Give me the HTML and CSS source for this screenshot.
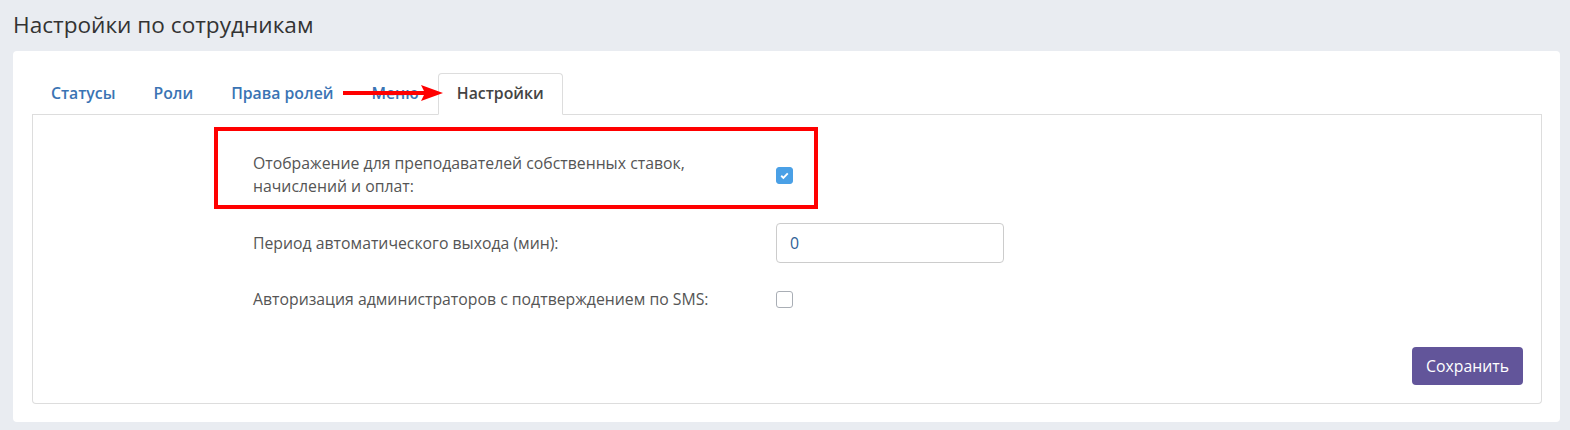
FILE: index.html
```html
<!DOCTYPE html>
<html lang="ru">
<head>
    <meta charset="UTF-8">
    <title>Настройки по сотрудникам</title>
    <link rel="stylesheet" href="styles.css">
</head>
<body>
    <h1 class="page-title">Настройки по сотрудникам</h1>
    <div class="card">
        <ul class="tabs">
            <li><a href="#">Статусы</a></li>
            <li><a href="#">Роли</a></li>
            <li><a href="#">Права ролей</a></li>
            <li><a href="#">Меню</a></li>
            <li class="active"><a href="#">Настройки</a></li>
        </ul>
        <div class="tab-panel">
            <form class="settings-form" action="#" method="post">
                <div class="form-row">
                    <label for="showRates">Отображение для преподавателей собственных ставок, начислений и оплат:</label>
                    <div class="control"><input type="checkbox" id="showRates" checked></div>
                </div>
                <div class="form-row">
                    <label for="logoutPeriod">Период автоматического выхода (мин):</label>
                    <div class="control"><input type="text" id="logoutPeriod" value="0"></div>
                </div>
                <div class="form-row">
                    <label for="smsAuth">Авторизация администраторов с подтверждением по SMS:</label>
                    <div class="control"><input type="checkbox" id="smsAuth"></div>
                </div>
                <div class="form-actions">
                    <button type="submit">Сохранить</button>
                </div>
            </form>
        </div>

        <!-- пометки поверх скриншота -->
        <div class="mark-box"></div>
        <div class="mark-arrow">
            <svg width="100" height="16" viewBox="0 0 100 16">
                <rect x="0" y="6" width="82" height="4" fill="#f00"/>
                <polygon points="78,0 100,8 78,16 82,8" fill="#f00"/>
            </svg>
        </div>
    </div>
</body>
</html>
```

FILE: styles.css
```css
body {
    margin: 0;
    padding: 0 10px 0 13px;
    font-family: "Open Sans", Arial, sans-serif;
    background-color: #e9ecf1;
    color: #333;
}

.page-title {
    margin: 9px 0 0;
    font-size: 22.6px;
    font-weight: 400;
    line-height: 32px;
    color: #333;
}

.card {
    position: relative;
    margin-top: 10px;
    background-color: #fff;
    border-radius: 4px;
    padding: 22px 18px 18px 19px;
}

.tabs {
    display: flex;
    margin: 0;
    padding: 0;
    list-style: none;
    border-bottom: 1px solid #ddd;
}

.tabs li {
    margin-bottom: -1px;
}

.tabs a {
    display: block;
    padding: 9px 18px 10px;
    font-size: 15.8px;
    font-weight: 600;
    line-height: 21px;
    color: #3a74b4;
    text-decoration: none;
    border: 1px solid transparent;
    border-radius: 4px 4px 0 0;
}

.tabs .active a {
    color: #444;
    background-color: #fff;
    border-color: #ddd #ddd transparent;
}

.tab-panel {
    border: 1px solid #ddd;
    border-top: none;
    border-radius: 0 0 4px 4px;
    padding: 37px 18px 18px 220px;
}

.form-row {
    display: flex;
    align-items: center;
    margin-bottom: 25px;
    font-size: 15.8px;
    line-height: 23px;
    color: #555;
}

.form-row label {
    box-sizing: border-box;
    width: 523px;
    padding-right: 15px;
}

.form-row input[type="text"] {
    box-sizing: border-box;
    width: 228px;
    height: 40px;
    padding: 0 13px;
    border: 1px solid #ccc;
    border-radius: 4px;
    font-family: inherit;
    font-size: 15.8px;
    color: #2e5f96;
}

.form-row input[type="checkbox"] {
    appearance: none;
    display: block;
    width: 17px;
    height: 17px;
    margin: 0;
    border: 1px solid #a9aeb5;
    border-radius: 3px;
    background-color: #fff;
}

.form-row input[type="checkbox"]:checked {
    border-color: #4aa0e6;
    background: #4aa0e6 url("data:image/svg+xml,%3Csvg xmlns='http://www.w3.org/2000/svg' viewBox='0 0 16 16'%3E%3Cpath d='M4.5 8.3l2.3 2.2 4.7-4.8' fill='none' stroke='%23fff' stroke-width='2'/%3E%3C/svg%3E") center / 15px no-repeat;
}

.form-actions {
    display: flex;
    justify-content: flex-end;
    margin-top: 36px;
}

.form-actions button {
    background-color: #62559a;
    color: #fff;
    border: none;
    border-radius: 4px;
    padding: 0 14px;
    height: 38px;
    font-family: inherit;
    font-size: 15.8px;
    cursor: pointer;
}

.mark-box {
    position: absolute;
    left: 201px;
    top: 76px;
    width: 596px;
    height: 74px;
    border: 4px solid #f00;
}

.mark-arrow {
    position: absolute;
    left: 330px;
    top: 34px;
    line-height: 0;
}
```
